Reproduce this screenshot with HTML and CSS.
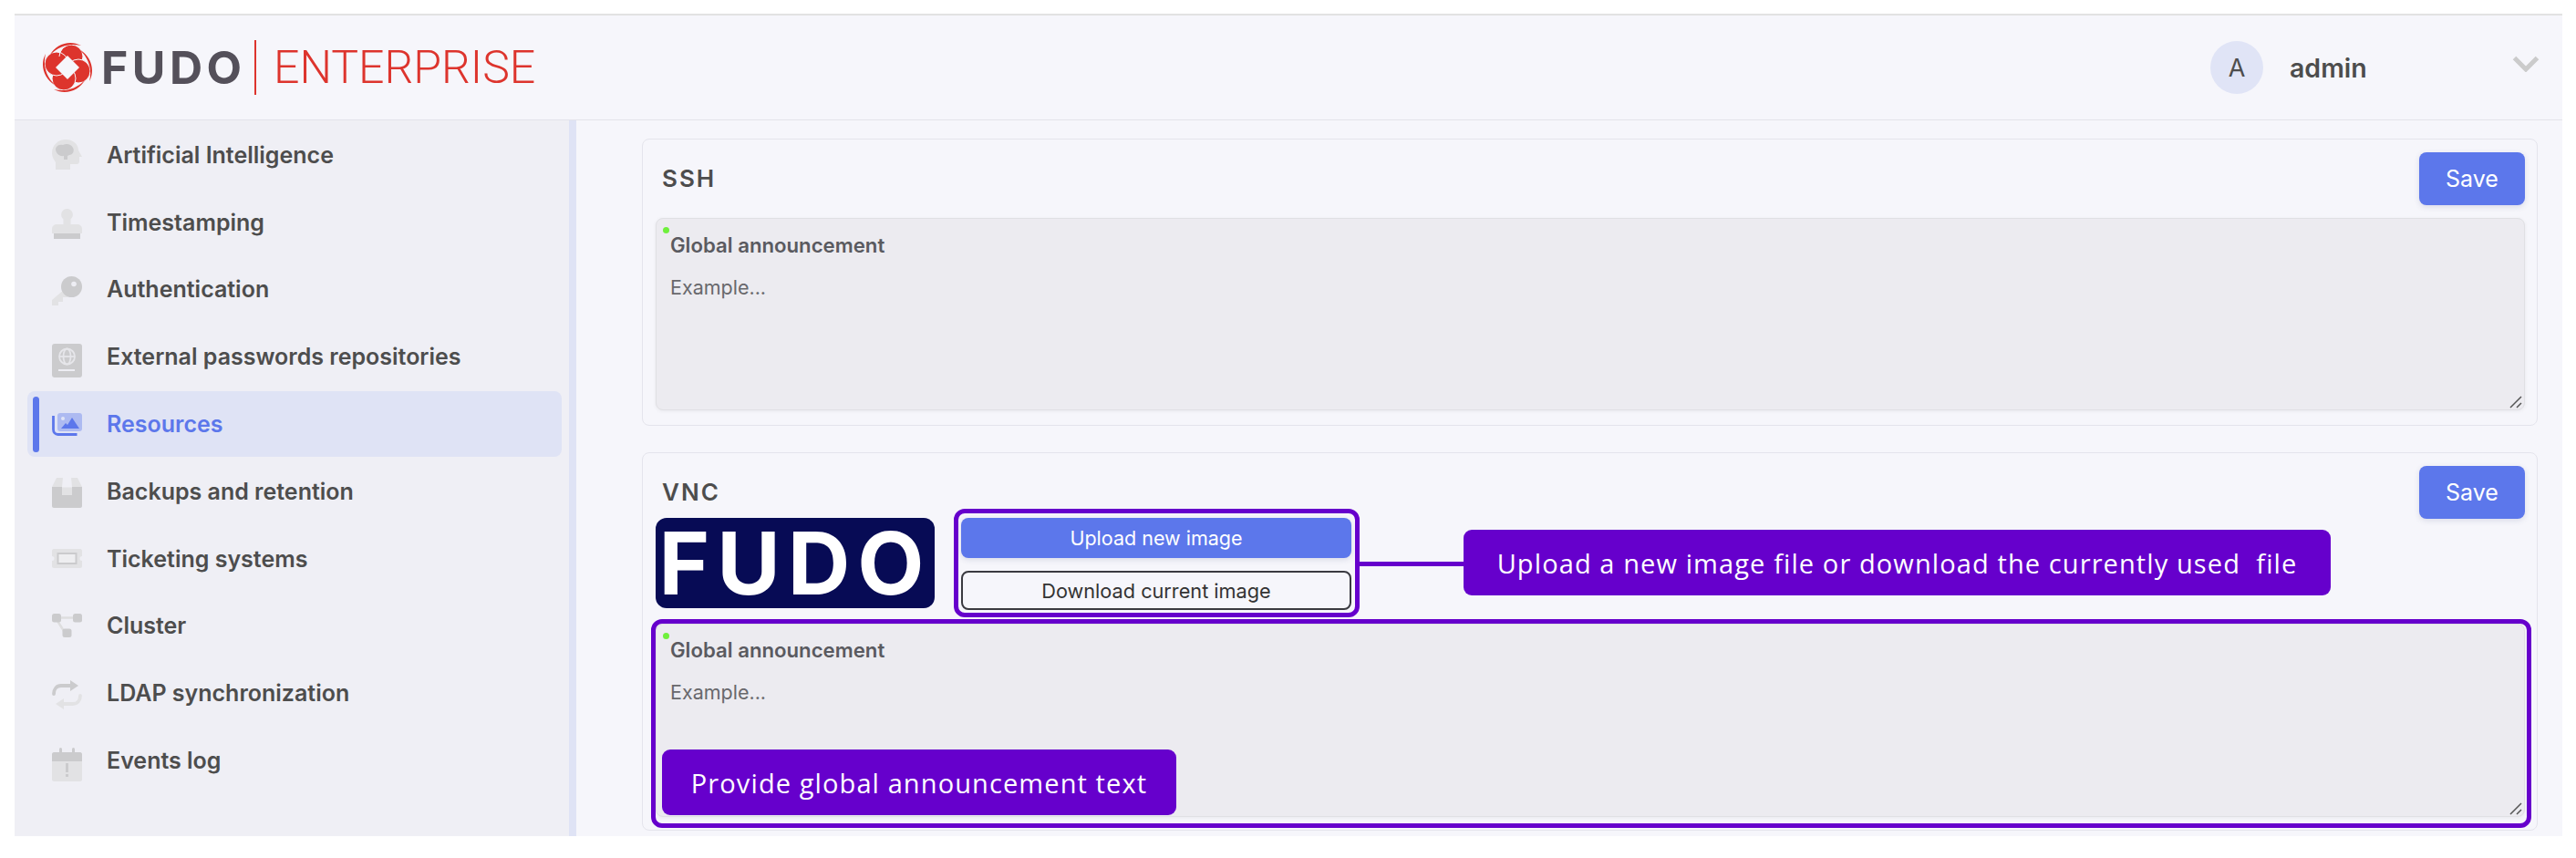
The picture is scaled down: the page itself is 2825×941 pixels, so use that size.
FILE: index.html
```html
<!DOCTYPE html>
<html lang="en">
<head>
<meta charset="utf-8">
<title>Fudo Enterprise</title>
<link rel="stylesheet" href="styles.css">
</head>
<body>
<div class="app">
  <header class="topbar">
    <div class="brand">
      <svg class="brand-mark" viewBox="0 0 58 58" aria-hidden="true">
        <g fill="#dd342d" stroke="#f6f6fb" stroke-width="1">
          <circle cx="33" cy="17" r="13"/>
          <circle cx="41" cy="33" r="13"/>
          <circle cx="25" cy="41" r="13"/>
          <circle cx="17" cy="25" r="13"/>
          <path d="M33 4a13 13 0 0 0-13 13" fill="none"/>
        </g>
        <g fill="#dd342d">
          <path d="M10 15C16 4 31-2 44 5 32 2 20 5 10 15Z"/>
          <path d="M10 15C16 4 31-2 44 5 32 2 20 5 10 15Z" transform="rotate(90 29 29)"/>
          <path d="M10 15C16 4 31-2 44 5 32 2 20 5 10 15Z" transform="rotate(180 29 29)"/>
          <path d="M10 15C16 4 31-2 44 5 32 2 20 5 10 15Z" transform="rotate(270 29 29)"/>
        </g>
        <path d="M29 16 42 29 29 42 16 29Z" fill="#f6f6fb"/>
      </svg>
      <span class="brand-name">FUDO</span>
      <span class="brand-rule"></span>
      <span class="brand-product">ENTERPRISE</span>
    </div>
    <div class="user">
      <span class="avatar">A</span>
      <span class="user-name">admin</span>
      <svg class="chevron" viewBox="0 0 30 18" aria-hidden="true"><path d="M2.500 2.500 15 15 27.500 2.500" fill="none" stroke="#cbcbcb" stroke-width="5"/></svg>
    </div>
  </header>
  <div class="body">
    <nav class="sidebar">
      <a class="nav-item">
        <svg class="nav-icon" viewBox="0 0 33 33"><path d="M15 0C7 0 0 6 0 15c0 4 2 7 4 10v8h16v-6h7c2 0 3-1 3-3v-5h3l-4-7C29 6 24 0 15 0Z" fill="#e2e2e4"/><path d="M4 10c1-4 5-5 8-4 4-2 9-1 11 3 2 3 0 8-4 8l-2 1v4h-4v-4c-5 1-9-3-9-8Z" fill="#cbcbcd"/></svg>
        <span>Artificial Intelligence</span>
      </a>
      <a class="nav-item">
        <svg class="nav-icon icon-down-2" viewBox="0 0 33 33"><path d="M16.500 0a6.500 6.500 0 0 1 4 11.500V17h7c3 0 5.500 2 5.500 5v5H0v-5c0-3 2.500-5 5.500-5h7v-5.500a6.500 6.500 0 0 1 4-11.500Z" fill="#e2e2e4"/><path d="M2 27h29v6H2Z" fill="#cbcbcd"/></svg>
        <span>Timestamping</span>
      </a>
      <a class="nav-item">
        <svg class="nav-icon icon-down-2" viewBox="0 0 33 33"><path d="M14 14 0 26v6h7v-4h5v-5h5l3-4Z" fill="#e2e2e4"/><circle cx="21.500" cy="11.500" r="11.500" fill="#cbcbcd"/><circle cx="24" cy="8.500" r="2.800" fill="#eeeef4"/></svg>
        <span>Authentication</span>
      </a>
      <a class="nav-item">
        <svg class="nav-icon icon-down-4" viewBox="0 0 33 37"><rect width="33" height="37" rx="3" fill="#cbcbcd"/><g fill="none" stroke="#e6e6ea" stroke-width="1.800"><circle cx="16.500" cy="14" r="8.500"/><ellipse cx="16.500" cy="14" rx="4" ry="8.500"/><path d="M8 14h17"/></g><path d="M7 28h18v2H7Z" fill="#eeeef4"/></svg>
        <span>External passwords repositories</span>
      </a>
      <a class="nav-item is-active">
        <svg class="nav-icon" viewBox="0 0 33 25"><path d="M1.500 3v15c0 3 2 5.500 5 5.500h21" fill="none" stroke="#5c77eb" stroke-width="2.800"/><rect x="6" width="27" height="20" rx="3" fill="#adbaf1"/><path d="M10 17 15 11l2 2 5-8 8 12Z" fill="#5c77eb"/><circle cx="12" cy="6" r="2" fill="#e0e4f6"/></svg>
        <span>Resources</span>
      </a>
      <a class="nav-item">
        <svg class="nav-icon icon-down-2" viewBox="0 0 33 33"><path d="M5 0h7l-1 10v9h11v-9l-1-10h7l5 10v.5H0V10Z" fill="#e2e2e4"/><path d="M0 10h11v9h11v-9h11v21c0 1-1 2-2 2H2c-1 0-2-1-2-2Z" fill="#cbcbcd"/></svg>
        <span>Backups and retention</span>
      </a>
      <a class="nav-item">
        <svg class="nav-icon" viewBox="0 0 33 21"><path d="M2 0h29c1 0 2 1 2 2v6a2.500 2.500 0 0 0 0 5v6c0 1-1 2-2 2H2c-1 0-2-1-2-2v-6a2.500 2.500 0 0 0 0-5V2c0-1 1-2 2-2Z" fill="#e2e2e4"/><rect x="6.500" y="5" width="20" height="11" fill="#eeeef0" stroke="#cbcbcd" stroke-width="2"/></svg>
        <span>Ticketing systems</span>
      </a>
      <a class="nav-item">
        <svg class="nav-icon" viewBox="0 0 33 26"><path d="M9 4.500h15M6 8l7 11" stroke="#dededf" stroke-width="2.500"/><rect width="10" height="9.500" rx="2.500" fill="#cbcbcd"/><rect x="23" width="10" height="9.500" rx="2.500" fill="#cbcbcd"/><rect x="11.500" y="16.500" width="10" height="9.500" rx="2.500" fill="#cbcbcd"/></svg>
        <span>Cluster</span>
      </a>
      <a class="nav-item">
        <svg class="nav-icon icon-down-2" viewBox="0 0 33 32"><path d="M2 15c0-5 3-9 8-9h12" fill="none" stroke="#cbcbcd" stroke-width="3.800" stroke-linecap="round"/><path d="M20 0l9 6-9 6Z" fill="#cbcbcd"/><path d="M31 17c0 5-3 9-8 9H11" fill="none" stroke="#e2e2e4" stroke-width="3.800" stroke-linecap="round"/><path d="M13 20l-9 6 9 6Z" fill="#e2e2e4"/></svg>
        <span>LDAP synchronization</span>
      </a>
      <a class="nav-item">
        <svg class="nav-icon icon-down-4" viewBox="0 0 33 37"><path d="M0 15h33v20c0 1-1 2-2 2H2c-1 0-2-1-2-2Z" fill="#e2e2e4"/><path d="M2 5h6V1.500a1.500 1.500 0 0 1 3 0V5h11V1.500a1.500 1.500 0 0 1 3 0V5h6c1 0 2 1 2 2v8H0V7c0-1 1-2 2-2Z" fill="#cbcbcd"/><path d="M15 17h3v10h-3Zm0 12h3v3h-3Z" fill="#cbcbcd"/></svg>
        <span>Events log</span>
      </a>
    </nav>
    <main class="content">
      <section class="card card-ssh">
        <div class="card-head">
          <h2>SSH</h2>
          <button class="btn-save">Save</button>
        </div>
        <div class="announce">
          <i class="dot"></i>
          <b>Global announcement</b>
          <p>Example...</p>
          <svg class="grip" viewBox="0 0 14 14"><path d="M1 13 13 1M8 13l5-5" stroke="#555" stroke-width="1.500"/></svg>
        </div>
      </section>
      <section class="card card-vnc">
        <div class="card-head card-head-vnc">
          <h2>VNC</h2>
          <button class="btn-save">Save</button>
        </div>
        <div class="image-row">
          <div class="image-preview">FUDO</div>
          <div class="image-actions">
            <button class="btn-upload">Upload new image</button>
            <button class="btn-download">Download current image</button>
            <div class="mark mark-actions"></div>
            <div class="connector"></div>
            <div class="callout callout-upload">Upload a new image file or download the currently used&nbsp; file</div>
          </div>
        </div>
        <div class="announce announce-vnc">
          <i class="dot"></i>
          <b>Global announcement</b>
          <p>Example...</p>
          <svg class="grip" viewBox="0 0 14 14"><path d="M1 13 13 1M8 13l5-5" stroke="#555" stroke-width="1.500"/></svg>
          <div class="mark mark-announce"></div>
          <div class="callout callout-announce">Provide global announcement text</div>
        </div>
      </section>
    </main>
  </div>
</div>
</body>
</html>
```
FILE: styles.css
```css
* { box-sizing: border-box; }
html, body { margin: 0; height: 100%; background: #fff; }
body { padding: 15px 15px 24px 16px; font-family: Inter, "Liberation Sans", sans-serif; color: #4d4d4d; overflow: hidden; }
.app { height: 902px; display: flex; flex-direction: column; background: #f6f6fb; border-top: 2px solid #e2e2e2; overflow: hidden; }
.topbar { height: 115px; flex: none; display: flex; align-items: center; justify-content: space-between; border-bottom: 1px solid #e3e3ea; padding: 0 25px 0 29px; }
.brand { display: flex; align-items: center; }
.brand-mark { width: 58px; height: 58px; flex: none; }
.brand-name { width: 148px; margin-left: 8px; font: 700 50px/1 Inter, sans-serif; color: #54505a; letter-spacing: 4.500px; white-space: nowrap; }
.brand-rule { width: 2px; height: 60px; background: #dd342d; margin: 0 19px 0 20px; }
.brand-product { font: 300 50px/1 Roboto, sans-serif; color: #dd342d; }
.user { display: flex; align-items: center; }
.avatar { width: 58px; height: 58px; border-radius: 50%; background: #e0e4f6; display: flex; align-items: center; justify-content: center; font-size: 27px; }
.user-name { margin-left: 29px; width: 244px; font-size: 28.500px; font-weight: 600; }
.chevron { width: 30px; height: 18px; margin-top: -8px; }
.body { flex: 1; min-height: 0; display: flex; }
.sidebar { width: 616px; flex: none; background: #efeff5; border-right: 8px solid #dfe3f5; padding: 2px 8px 0 14px; display: flex; flex-direction: column; gap: 2px; }
.nav-item { height: 71.800px; flex: none; display: flex; align-items: center; padding-left: 27px; font-size: 25px; font-weight: 600; border-radius: 8px; position: relative; }
.nav-icon { width: 33px; flex: none; margin-right: 27px; }
.icon-down-2 { margin-top: 4px; }
.icon-down-4 { margin-top: 8px; }
.is-active { background: #dfe3f5; color: #5c77eb; }
.is-active::before { content: ""; position: absolute; left: 6px; top: 6px; bottom: 5px; width: 7px; border-radius: 4px; background: #5c77eb; }
.content { flex: 1; min-width: 0; padding: 20px 27px 0 72px; display: flex; flex-direction: column; gap: 29px; }
.card { border: 1px solid #e4e4ec; border-radius: 8px; padding: 14px 13px 0 14px; flex: none; }
.card-ssh { height: 315px; }
.card-vnc { height: 415px; }
.card-head { display: flex; justify-content: space-between; align-items: center; padding-left: 7px; height: 58px; }
.card-head-vnc { height: 58px; margin-bottom: -1px; }
.card-head h2 { margin: -2px 0 0; font-size: 26px; font-weight: 600; letter-spacing: 2px; }
.btn-save { width: 116px; height: 58px; border: 0; border-radius: 8px; background: #5c77eb; color: #fff; font: 400 25px Inter, sans-serif; box-shadow: 0 2px 6px rgba(60, 70, 120, .15); }
.announce { margin-top: 14px; height: 211px; background: #ecebf0; border: 1px solid #e0e0e4; border-radius: 8px; position: relative; padding: 14px 15px; box-shadow: 0 1px 4px rgba(0, 0, 0, .06); }
.announce b { display: block; font-size: 22.200px; line-height: 30px; font-weight: 600; color: #5a5a60; }
.announce p { margin: 16px 0 0; font-size: 21.500px; line-height: 30px; color: #68686c; }
.dot { position: absolute; left: 7px; top: 9px; width: 7px; height: 7px; border-radius: 50%; background: #6ff03c; }
.grip { position: absolute; right: 2px; bottom: 1px; width: 14px; height: 14px; }
.image-row { display: flex; gap: 29px; align-items: flex-start; }
.image-preview { width: 306px; height: 99px; flex: none; border-radius: 12px; background: #070b55; color: #fff; display: flex; align-items: center; justify-content: center; font: 700 95px/1 Inter, sans-serif; letter-spacing: 8px; }
.image-actions { width: 428px; position: relative; display: flex; flex-direction: column; gap: 14px; }
.btn-upload, .btn-download { width: 100%; height: 44px; border-radius: 8px; font: 400 21.500px Inter, sans-serif; }
.btn-upload { border: 0; background: #5c77eb; color: #fff; box-shadow: 0 2px 6px rgba(60, 70, 120, .15); }
.btn-download { height: 43px; border: 2px solid #3a3a40; background: #f6f6fb; color: #333; font-size: 21.700px; }
.mark { position: absolute; border: 5px solid #6600cc; border-radius: 12px; pointer-events: none; }
.mark-actions { left: -8px; top: -10px; width: 445px; height: 119px; }
.connector { position: absolute; left: 437px; top: 48px; width: 114px; height: 5px; background: #6600cc; }
.callout { position: absolute; display: flex; align-items: center; justify-content: center; background: #6600cc; color: #fff; border-radius: 9px; font: 400 29px "Open Sans", sans-serif; letter-spacing: 1.100px; white-space: nowrap; }
.callout-upload { left: 551px; top: 13px; width: 951px; height: 72px; }
.announce-vnc { margin-top: 15px; height: 212px; padding-top: 13px; }
.mark-announce { left: -6px; top: -6px; width: 2062px; height: 229px; }
.callout-announce { left: 6px; top: 137px; width: 564px; height: 72px; }
```
